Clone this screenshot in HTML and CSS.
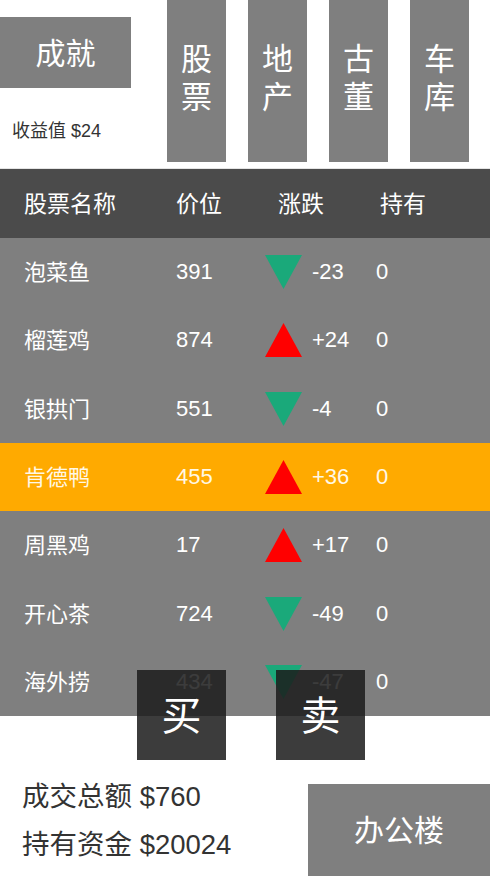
FILE: index.html
```html
<!DOCTYPE html>
<html lang="zh">
<head>
<meta charset="utf-8">
<link rel="stylesheet" href="styles.css">
</head>
<body>
<div class="page">
  <div class="top">
    <div class="left">
      <div class="btn achieve cjk">成就</div>
      <div class="income">收益值 $24</div>
    </div>
    <div class="tabs">
      <div class="tab cjk"><span class="vt">股票</span></div>
      <div class="tab cjk"><span class="vt">地产</span></div>
      <div class="tab cjk"><span class="vt">古董</span></div>
      <div class="tab cjk"><span class="vt">车库</span></div>
    </div>
  </div>

  <div class="table-wrap">
    <div class="thead cjk">
      <div>股票名称</div><div>价位</div><div>涨跌</div><div>持有</div>
    </div>
    <div class="row"><div class="cjk">泡菜鱼</div><div>391</div><div class="tri"><svg viewBox="0 0 37 34" width="37" height="34"><polygon points="0,0 37,0 18.5,34" fill="#1aa97a"/></svg></div><div>-23</div><div>0</div></div>
    <div class="row"><div class="cjk">榴莲鸡</div><div>874</div><div class="tri"><svg viewBox="0 0 37 34" width="37" height="34"><polygon points="18.5,0 37,34 0,34" fill="#ff0000"/></svg></div><div>+24</div><div>0</div></div>
    <div class="row"><div class="cjk">银拱门</div><div>551</div><div class="tri"><svg viewBox="0 0 37 34" width="37" height="34"><polygon points="0,0 37,0 18.5,34" fill="#1aa97a"/></svg></div><div>-4</div><div>0</div></div>
    <div class="row active"><div class="cjk">肯德鸭</div><div>455</div><div class="tri"><svg viewBox="0 0 37 34" width="37" height="34"><polygon points="18.5,0 37,34 0,34" fill="#ff0000"/></svg></div><div>+36</div><div>0</div></div>
    <div class="row"><div class="cjk">周黑鸡</div><div>17</div><div class="tri"><svg viewBox="0 0 37 34" width="37" height="34"><polygon points="18.5,0 37,34 0,34" fill="#ff0000"/></svg></div><div>+17</div><div>0</div></div>
    <div class="row"><div class="cjk">开心茶</div><div>724</div><div class="tri"><svg viewBox="0 0 37 34" width="37" height="34"><polygon points="0,0 37,0 18.5,34" fill="#1aa97a"/></svg></div><div>-49</div><div>0</div></div>
    <div class="row"><div class="cjk">海外捞</div><div>434</div><div class="tri"><svg viewBox="0 0 37 34" width="37" height="34"><polygon points="0,0 37,0 18.5,34" fill="#1aa97a"/></svg></div><div>-47</div><div>0</div></div>

    <div class="trade buy cjk">买</div>
    <div class="trade sell cjk">卖</div>
  </div>

  <div class="bottom">
    <div class="totals">
      <div>成交总额 $760</div>
      <div>持有资金 $20024</div>
    </div>
    <div class="btn office cjk">办公楼</div>
  </div>
</div>
</body>
</html>
```

FILE: styles.css
```css
* { box-sizing: border-box; }
html, body { margin: 0; padding: 0; background: #fff; }
body {
  font-family: "Liberation Sans", "Noto Sans CJK SC", sans-serif;
  width: 490px;
  height: 876px;
  overflow: hidden;
}
.cjk { font-family: "Noto Sans CJK SC", sans-serif; }
.page { width: 490px; height: 876px; display: flex; flex-direction: column; }

.top { height: 169px; display: flex; border-bottom: 1px solid #e4e4e4; }
.left { width: 167px; display: flex; flex-direction: column; }
.btn {
  background: #7f7f7f;
  color: #fff;
  display: flex;
  align-items: center;
  justify-content: center;
}
.achieve { margin-top: 17px; width: 131px; height: 71px; font-size: 30px; padding-bottom: 4px; }
.income { margin-top: 28px; padding-left: 12px; font-size: 18px; color: #333; }

.tabs { display: flex; gap: 22px; }
.tab {
  width: 59px;
  height: 162px;
  background: #7f7f7f;
  color: #fff;
  font-size: 31px;
  display: flex;
  align-items: center;
  justify-content: center;
}
.vt {
  writing-mode: vertical-rl;
  text-orientation: upright;
  letter-spacing: 7px;
  line-height: 1;
}

.table-wrap { position: relative; }
.thead {
  height: 69px;
  background: #4b4b4b;
  color: #fff;
  font-size: 23px;
  display: grid;
  grid-template-columns: 152px 102px 102px 1fr;
  align-items: center;
  padding-left: 24px;
}
.thead > div { padding-bottom: 3px; }
.row {
  height: 68.3px;
  background: #7f7f7f;
  color: #fff;
  font-size: 22px;
  display: grid;
  grid-template-columns: 152px 89px 47px 64px 1fr;
  align-items: center;
  padding-left: 24px;
}
.row > .cjk { padding-bottom: 4px; }
.row.active { background: #ffaa00; color: #fff8e6; }
.tri { display: flex; align-items: center; }
.tri svg { display: block; }

.trade {
  position: absolute;
  top: 501px;
  width: 89px;
  height: 90px;
  background: rgba(28, 28, 28, 0.86);
  color: #fff;
  font-size: 40px;
  display: flex;
  align-items: center;
  justify-content: center;
  padding-bottom: 4px;
}
.buy { left: 137px; }
.sell { left: 276px; }

.bottom { flex: 1; display: flex; justify-content: space-between; }
.totals {
  padding-left: 22px;
  padding-top: 57px;
  font-size: 27.5px;
  color: #333;
  line-height: 48px;
}
.office {
  margin-top: 68px;
  width: 182px;
  height: 92px;
  font-size: 30px;
  padding-bottom: 4px;
}
```
